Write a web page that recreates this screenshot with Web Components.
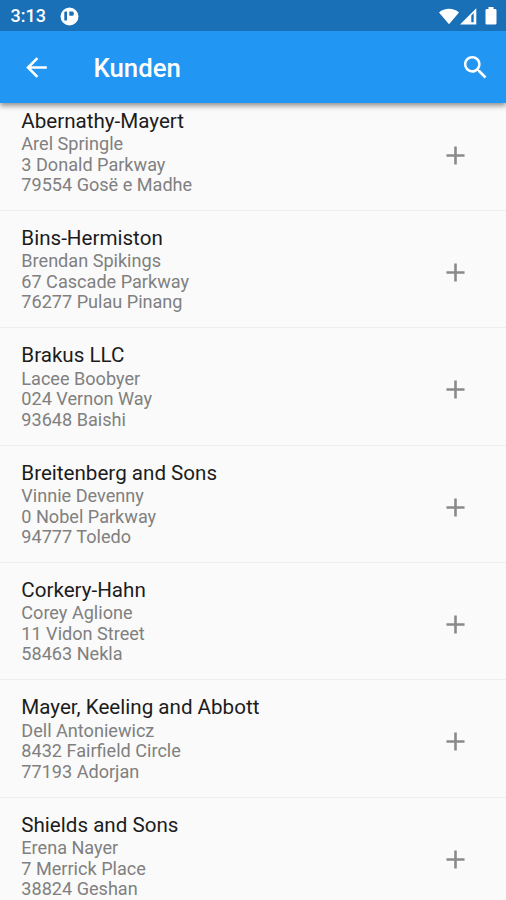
<!DOCTYPE html>
<html lang="de">
<head>
<meta charset="utf-8">
<title>Kunden</title>
<style>
:root {
    --primary: #2196f3;
    --primary-dark: #1a70b6;
    --bg: #fafafa;
    --text: #1c1c1c;
    --text-secondary: #808080;
    --divider: #eeeeee;
}
html, body { height: 100%; }
body {
    margin: 0;
    overflow: hidden;
    background: var(--bg);
    font-family: Roboto, "Liberation Sans", sans-serif;
}
</style>
</head>
<body>
<customer-screen></customer-screen>

<script>
const CUSTOMERS = [
    ['Abernathy-Mayert', 'Arel Springle', '3 Donald Parkway', '79554 Gosë e Madhe'],
    ['Bins-Hermiston', 'Brendan Spikings', '67 Cascade Parkway', '76277 Pulau Pinang'],
    ['Brakus LLC', 'Lacee Boobyer', '024 Vernon Way', '93648 Baishi'],
    ['Breitenberg and Sons', 'Vinnie Devenny', '0 Nobel Parkway', '94777 Toledo'],
    ['Corkery-Hahn', 'Corey Aglione', '11 Vidon Street', '58463 Nekla'],
    ['Mayer, Keeling and Abbott', 'Dell Antoniewicz', '8432 Fairfield Circle', '77193 Adorjan'],
    ['Shields and Sons', 'Erena Nayer', '7 Merrick Place', '38824 Geshan'],
];

class StatusBar extends HTMLElement {
    constructor() {
        super();
        this.attachShadow({ mode: 'open' }).innerHTML = `
<style>
:host {
    display: flex;
    align-items: center;
    box-sizing: border-box;
    height: 31px;
    padding: 1px 9px 0 10.5px;
    background: var(--primary-dark);
    color: #fff;
}
.time { width: 36px; font-size: 18px; font-weight: 500; line-height: 24px; }
svg { display: block; fill: #fff; }
.app { margin-left: 13.5px; }
.system { display: flex; align-items: center; gap: 1px; margin-left: auto; }
.battery { margin-left: 7px; }
</style>
<span class="time">3:13</span>
<svg class="app" width="19" height="19" viewBox="0 0 19 19">
  <path fill-rule="evenodd" d="M9.5 0.5a9 9 0 1 1 0 18a9 9 0 0 1 0-18zM5.6 4.5q-1.3 0-1.3 1.3v7.6h2.7V4.5zM9.3 4.5v4.3h2.9a1.6 1.6 0 0 0 1.6-1.6V6a1.5 1.5 0 0 0-1.5-1.5z"/>
</svg>
<div class="system">
  <svg width="20" height="17" viewBox="0 0 20 17"><path d="M0 4.4C5.5-.6 14.5-.6 20 4.4L10 16.3z"/></svg>
  <svg width="17" height="17" viewBox="0 0 17 17"><path fill-rule="evenodd" d="M0 16.5L16.3.3v16.2zM11.3 7.5v6.7h2.4V5.2z"/></svg>
  <svg class="battery" width="12" height="18" viewBox="0 0 12 18"><path d="M3.5 0h5v2h1.7q1.3 0 1.3 1.3v12.900q0 1.300-1.300 1.300H1.800q-1.300 0-1.300-1.300V3.300Q.5 2 1.800 2h1.700z"/></svg>
</div>
`;
    }
}

class AppBar extends HTMLElement {
    constructor() {
        super();
        this.attachShadow({ mode: 'open' }).innerHTML = `
<style>
:host {
    display: flex;
    align-items: center;
    box-sizing: border-box;
    height: 72px;
    padding: 1px 15px 0 21px;
    background: var(--primary);
    color: #fff;
}
h1 {
    flex: 1;
    margin: 1px 0 0 41.5px;
    font-size: 25.75px;
    font-weight: 500;
    line-height: 30px;
}
svg { display: block; width: 31px; height: 31px; fill: currentColor; }
</style>
<svg viewBox="0 0 24 24"><path d="M20 11H7.83l5.59-5.59L12 4l-8 8 8 8 1.41-1.41L7.83 13H20v-2z"/></svg>
<h1><slot></slot></h1>
<svg viewBox="0 0 24 24"><path d="M15.5 14h-.79l-.28-.27A6.471 6.471 0 0 0 16 9.5 6.5 6.5 0 1 0 9.5 16c1.61 0 3.09-.59 4.23-1.57l.27.28v.79l5 4.99L20.49 19l-4.99-5zm-6 0C7.01 14 5 11.99 5 9.5S7.01 5 9.5 5 14 7.01 14 9.5 11.99 14 9.5 14z"/></svg>
`;
    }
}

class CustomerRow extends HTMLElement {
    constructor() {
        super();
        this.attachShadow({ mode: 'open' }).innerHTML = `
<style>
:host {
    display: flex;
    align-items: center;
    box-sizing: border-box;
    height: 117.33px;
    padding: 0 35.5px 0 21.3px;
    border-bottom: 1px solid var(--divider);
}
.info { flex: 1; height: 86px; }
.name { font-size: 20.6px; line-height: 24.4px; color: var(--text); }
.lines { padding-top: .8px; font-size: 18.1px; line-height: 20.6px; color: var(--text-secondary); }
::slotted(div) { white-space: nowrap; }
svg { display: block; width: 31px; height: 31px; margin-top: 7px; fill: #8a8a8a; }
</style>
<div class="info">
  <div class="name"><slot name="name"></slot></div>
  <div class="lines"><slot></slot></div>
</div>
<svg viewBox="0 0 24 24"><path d="M19 13h-6v6h-2v-6H5v-2h6V5h2v6h6v2z"/></svg>
`;
    }
}

class CustomerScreen extends HTMLElement {
    constructor() {
        super();
        this.attachShadow({ mode: 'open' }).innerHTML = `
<style>
:host { display: flex; flex-direction: column; height: 100vh; }
header {
    z-index: 1;
    box-shadow: 0 3px 5px rgba(0, 0, 0, .4);
}
main { flex: 1; min-height: 0; overflow: hidden; }
/* list is scrolled a little under the app bar */
.list { margin-top: -9.4px; }
</style>
<header>
  <status-bar></status-bar>
  <app-bar>Kunden</app-bar>
</header>
<main><div class="list"></div></main>
`;
    }

    connectedCallback() {
        const list = this.shadowRoot.querySelector('.list');
        list.replaceChildren(...CUSTOMERS.map(([name, ...lines]) => {
            const row = document.createElement('customer-row');
            const title = document.createElement('div');
            title.slot = 'name';
            title.textContent = name;
            row.append(title, ...lines.map((text) => {
                const line = document.createElement('div');
                line.textContent = text;
                return line;
            }));
            return row;
        }));
    }
}

customElements.define('status-bar', StatusBar);
customElements.define('app-bar', AppBar);
customElements.define('customer-row', CustomerRow);
customElements.define('customer-screen', CustomerScreen);
</script>
</body>
</html>
